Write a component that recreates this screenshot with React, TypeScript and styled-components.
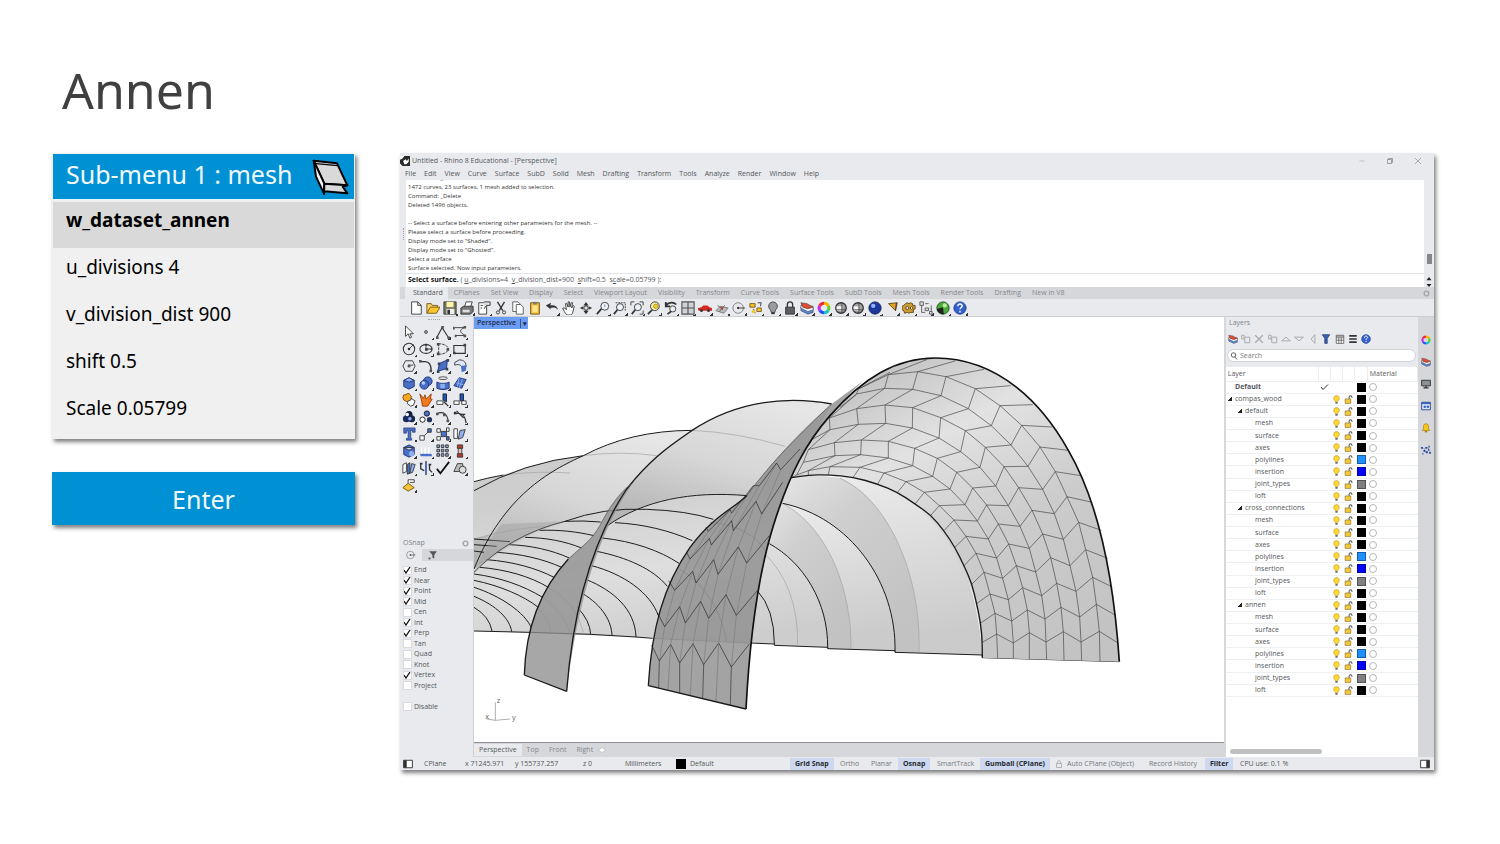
import React from "react";
import styled, { createGlobalStyle } from "styled-components";

const GlobalStyle = createGlobalStyle`
  * { box-sizing: border-box; }
  body { margin: 0; background: #fff; font-family: "Noto Sans", sans-serif; }
  button, input { font: inherit; color: inherit; }
  button { border: 0; padding: 0; background: none; cursor: pointer; }
  ul { list-style: none; margin: 0; padding: 0; }
  svg { display: block; }
`;

/* ---------- Page ---------- */

const Page = styled.main`
  padding: 56px 66px 56px 52px;
`;
const Title = styled.h1`
  margin: 0 0 29px 10px;
  font-size: 50px;
  line-height: 68px;
  font-weight: 400;
  color: #404040;
`;
const Columns = styled.div`
  display: grid;
  grid-template-columns: 303px minmax(0, 1fr);
  column-gap: 45px;
  align-items: start;
`;
const Side = styled.aside`
  display: grid;
  row-gap: 33px;
`;
const Menu = styled.section`
  padding: 1px 1px 3px;
  background: #f0f0f0;
  box-shadow: 2px 3px 4px rgba(0, 0, 0, 0.5);
`;
const MenuHeader = styled.header`
  display: flex;
  justify-content: space-between;
  height: 46px;
  padding: 0 5px 0 13px;
  background: #0091d4;
  border-bottom: 1px solid #e6f4fb;
  color: #f2faff;
`;
const MenuTitle = styled.h2`
  margin: 0;
  font-size: 25px;
  line-height: 40px;
  font-weight: 400;
`;
const MenuRow = styled.button<{ $selected?: boolean }>`
  display: block;
  width: 100%;
  height: ${(p) => (p.$selected ? 46 : 47)}px;
  margin-top: ${(p) => (p.$selected ? 2 : 0)}px;
  padding: ${(p) => (p.$selected ? 0 : 3)}px 13px 11px;
  text-align: left;
  font-size: 19px;
  line-height: ${(p) => (p.$selected ? 34 : 33)}px;
  font-weight: ${(p) => (p.$selected ? 700 : 400)};
  background: ${(p) => (p.$selected ? "#d9d9d9" : "transparent")};
  color: #000;
`;
const EnterButton = styled.button`
  height: 53px;
  background: #0091d4;
  color: #f2faff;
  font-size: 25px;
  box-shadow: 2px 3px 4px rgba(0, 0, 0, 0.5);
`;

/* ---------- Application window ---------- */

const AppWindow = styled.section`
  display: flex;
  flex-direction: column;
  min-width: 0;
  background: #e8eaed;
  color: #55575b;
  font-family: "Open Sans", "Noto Sans", sans-serif;
  font-size: 7px;
  line-height: 12px;
  box-shadow: 2px 3px 4px rgba(0, 0, 0, 0.5);
`;
const TitleBar = styled.header`
  display: flex;
  align-items: center;
  gap: 2px;
  height: 15px;
`;
const WindowTitle = styled.span`
  flex: 1;
`;
const WindowControls = styled.div`
  display: flex;
  gap: 20px;
  padding-right: 12px;
`;
const MenuBar = styled.nav`
  display: flex;
  gap: 8px;
  height: 12px;
  padding-left: 5px;
`;
const Console = styled.div`
  display: grid;
  grid-template-columns: 6px minmax(0, 1fr) 10px;
  height: 107px;
`;
const Grip = styled.span`
  align-self: center;
  justify-self: center;
  height: 12px;
  border-left: 1px dotted #a0a3a8;
`;
const ConsoleText = styled.div`
  display: flex;
  flex-direction: column;
  background: #fff;
`;
const History = styled.div`
  display: flex;
  flex-direction: column;
  justify-content: flex-end;
  height: 94px;
  overflow: hidden;
  padding-left: 2px;
  font-size: 6px;
  line-height: 9px;
  color: #333;
  border-bottom: 1px solid #e4e5e8;
`;
const HistoryLine = styled.div`
  flex: none;
  min-height: 9px;
`;
const Prompt = styled.div`
  padding-left: 2px;
  line-height: 12px;
  white-space: pre;
`;
const Strong = styled.b`
  color: #111;
`;
const ConsoleScroll = styled.div`
  display: flex;
  flex-direction: column;
  align-items: center;
  justify-content: flex-end;
  gap: 13px;
`;
const ScrollThumb = styled.span`
  width: 5px;
  height: 10px;
  background: #85878a;
`;
const TabBar = styled.nav`
  display: flex;
  align-items: center;
  height: 12px;
  padding: 0 4px 0 5px;
  background: #d6d7db;
`;
const Tab = styled.button<{ $active?: boolean }>`
  height: 12px;
  line-height: 12px;
  white-space: nowrap;
  color: ${(p) => (p.$active ? "#55575b" : "#85878b")};
  background: ${(p) => (p.$active ? "#e8eaed" : "transparent")};
`;
const ToolbarTab = styled(Tab)`
  padding: ${(p) => (p.$active ? "0 5px 0 8px" : "0 5px 0 6px")};
`;
const Spacer = styled.span`
  flex: 1;
`;
const Toolbar = styled.div`
  display: flex;
  align-items: center;
  height: 18px;
  padding-left: 7px;
  border-bottom: 1px solid #cdced2;
`;
const ToolButton = styled.button<{ $menu?: boolean }>`
  display: grid;
  place-items: center;
  flex: none;
  width: 17px;
  height: 17px;
  background: ${(p) =>
    p.$menu ? "linear-gradient(135deg, transparent 50%, #333 50%) 14px 14px / 3px 3px no-repeat" : "none"};
`;
const Workspace = styled.div`
  display: grid;
  grid-template-columns: 74px minmax(0, 1fr) 194px 16px;
`;
const Tools = styled.div`
  border-right: 1px solid #cfd0d4;
`;
const Palette = styled.div`
  display: grid;
  grid-template-columns: repeat(4, 17px);
  align-content: start;
  height: 220px;
`;
const PaletteGrip = styled.span`
  grid-column: 1 / -1;
  justify-self: center;
  width: 12px;
  height: 7px;
  border-bottom: 1px dotted #a0a3a8;
  margin: -4px 0 3px;
`;
const PanelTitle = styled.header`
  display: flex;
  align-items: center;
  justify-content: space-between;
  height: 12px;
  padding: 0 4px 0 3px;
  color: #808287;
`;
const SnapTabs = styled.div`
  display: flex;
  height: 12px;
  background: #d6d7db;
`;
const SnapTab = styled.button<{ $active?: boolean }>`
  display: grid;
  place-items: center;
  width: 22px;
  background: ${(p) => (p.$active ? "#e8eaed" : "transparent")};
`;
const SnapList = styled.div`
  display: grid;
  grid-template-rows: repeat(14, 1fr);
  height: 147px;
  margin-top: 4px;
  padding-left: 3px;
`;
const SnapItem = styled.label<{ $last?: boolean }>`
  grid-row: ${(p) => (p.$last ? 14 : "auto")};
  display: flex;
  align-items: center;
  gap: 2px;
  line-height: 10px;
`;
const Check = styled.input`
  appearance: none;
  width: 9px;
  height: 9px;
  margin: 0;
  background: #fff;
  border: 1px solid #d9dade;
  color: #111;
  &:checked {
    background: #fff
      url("data:image/svg+xml,%3Csvg xmlns='http://www.w3.org/2000/svg' viewBox='0 0 9 9'%3E%3Cpath d='M1 4l2 3 4-6' fill='none' stroke='%23111' stroke-width='1.3'/%3E%3C/svg%3E")
      center / 9px;
  }
`;
const Viewport = styled.div`
  display: flex;
  flex-direction: column;
  background: #fff;
`;
const Scene = styled.div`
  display: grid;
  border-bottom: 1px solid #8e9094;
`;
const SceneDrawing = styled.svg`
  grid-area: 1 / 1;
  width: 100%;
  height: auto;
`;
const ViewName = styled.button`
  grid-area: 1 / 1;
  z-index: 1;
  align-self: start;
  justify-self: start;
  display: flex;
  align-items: center;
  height: 12px;
  padding: 0 1px 0 3px;
  background: #6d9df3;
  color: #1c2c4c;
  font-weight: 600;
  gap: 4px;
`;
const ViewMenu = styled.span`
  padding-left: 2px;
  border-left: 1px solid #33558f;
  line-height: 9px;
`;
const ViewTabs = styled(TabBar)`
  height: 14px;
  padding: 0;
`;
const ViewTab = styled(Tab)`
  padding: 0 5px;
`;
const Layers = styled.section`
  display: flex;
  flex-direction: column;
  min-width: 0;
  border-left: 2px solid #d6d7db;
`;
const LayerTools = styled.div`
  display: grid;
  grid-template-columns: repeat(11, 1fr);
  width: 147px;
  height: 20px;
  align-items: center;
  justify-items: center;
`;
const Search = styled.label`
  display: flex;
  align-items: center;
  gap: 2px;
  height: 13px;
  margin: 0 2px 5px 1px;
  padding-left: 2px;
  background: #fff;
  border: 1px solid #d0d2d6;
  border-radius: 7px;
`;
const SearchInput = styled.input`
  width: 120px;
  height: 10px;
  padding: 0;
  border: 0;
  background: none;
  outline: none;
  &::placeholder { color: #77797d; }
`;
const LayerArea = styled.div`
  flex: 1;
  display: flex;
  flex-direction: column;
  justify-content: space-between;
  background: #fff;
`;
const LayerTable = styled.table`
  width: 100%;
  height: 330px;
  table-layout: fixed;
  border-collapse: collapse;
  th, td { padding: 0; height: 12px; line-height: 10px; border-bottom: 1px solid #eeeff1; }
  th { height: 14px; font-weight: 400; text-align: left; border-right: 1px solid #ecedf0; }
  svg { margin: 0 auto; }
`;
const NameCell = styled.td<{ $depth: number; $bold?: boolean }>`
  font-weight: ${(p) => (p.$bold ? 700 : 400)};
  white-space: nowrap;
  && { padding-left: ${(p) => p.$depth * 10 - 1}px; }
`;
const Arrow = styled.span`
  display: inline-block;
  width: 4px;
  height: 4px;
  margin: 0 3px 0 -7px;
  background: linear-gradient(135deg, transparent 50%, #222 50%);
`;
const Swatch = styled.span<{ $color: string }>`
  display: block;
  width: 9px;
  height: 9px;
  margin: 0 auto;
  background: ${(p) => p.$color};
  border: 1px solid rgba(0, 0, 0, 0.35);
`;
const Material = styled.span`
  display: block;
  width: 8px;
  height: 8px;
  margin-left: 1px;
  border: 1px solid #b5b7ba;
  border-radius: 50%;
`;
const HScroll = styled.span`
  width: 92px;
  height: 5px;
  margin: 0 0 3px 4px;
  border-radius: 3px;
  background: #bfc0c2;
`;
const PanelTabs = styled.nav`
  display: flex;
  flex-direction: column;
  align-items: center;
  padding-top: 12px;
  background: #d6d7db;
`;
const PanelTab = styled.button`
  display: grid;
  place-items: center;
  width: 16px;
  height: 22px;
`;
const StatusBar = styled.footer`
  display: grid;
  grid-template-columns: 21px 41px 50px 68px 42px 51px 119px 45px 31px 32px 34px 48px 70px 12px 82px 61px 30px minmax(0, 1fr) 14px;
  align-items: center;
  height: 13px;
  padding-left: 3px;
  white-space: nowrap;
`;
const StatusLayer = styled.span`
  display: flex;
  align-items: center;
  gap: 4px;
`;
const LayerChip = styled.i`
  width: 10px;
  height: 10px;
  background: #000;
`;
const Toggle = styled.button<{ $on?: boolean }>`
  justify-self: start;
  height: 12px;
  line-height: 12px;
  margin-left: ${(p) => (p.$on ? "-5px" : "0")};
  padding: ${(p) => (p.$on ? "0 5px" : "0")};
  color: ${(p) => (p.$on ? "#25282e" : "#77797e")};
  font-weight: ${(p) => (p.$on ? 700 : 400)};
  background: ${(p) => (p.$on ? "#ced8ef" : "transparent")};
`;

/* ---------- Icons, drawn on a 16 unit grid ---------- */

const K = "#333";
const B = "#4a6fc9";
const L = "#8fb0ee";

const icons: Record<string, React.ReactNode> = {
  file: <path d="M3 1h7l4 4v10H3zM10 1v4h4" fill="#fff" stroke={K} />,
  open: <><path d="M1 14V3h5l1 2h6v3" fill="#f7d569" stroke="#715411" /><path d="M1 14l4-7h11l-4 7z" fill="#ffc62f" stroke="#715411" /></>,
  save: <><path d="M1 1h14v14H1z" fill="#77765f" stroke={K} /><path d="M4 1h8v6H4z" fill="#fff3a8" /><path d="M4 9h9v6H4z" fill="#eee" /><path d="M5 10h3v5H5z" fill={K} /></>,
  print: <><path d="M5 7l2-6h7l-2 6" fill="#fff" stroke={K} /><path d="M1 8l3-2h11v6l-3 3H1z" fill="#777" stroke={K} /><path d="M3 10h8v3H3z" fill="#ddd" /></>,
  notes: <><path d="M2 2h9v13H2z" fill="#fff" stroke={K} /><path d="M8 1h7v4h-4l-3 4" fill="#ddd" stroke={K} /><path d="M4 5h3M4 8h2" stroke={K} /></>,
  cut: <><path d="M4 1l6 10M12 1L6 11" stroke={K} strokeWidth="1.5" fill="none" /><circle cx="4.500" cy="13" r="1.800" fill="none" stroke={K} /><circle cx="11.500" cy="13" r="1.800" fill="none" stroke={K} /></>,
  copy: <><path d="M2 1h6l2 2v9H2z" fill="#fff" stroke="#555" /><path d="M6 4h5l3 3v8H6z" fill="#fff" stroke="#555" /></>,
  paste: <><path d="M3 2h10v13H3z" fill="#f3bd35" stroke="#6c500c" /><path d="M6 1h4v3H6z" fill="#777" /><path d="M5 5h6v8H5z" fill="#ffe487" /></>,
  undo: <path d="M1 5l6-3-1 3c5-1 8 1 9 5-3-3-6-3-9-2l1 2z" fill={K} />,
  hand: <path d="M4 14C2 11 1 9 1 8l2 0 2 2-1-7 1.500 0L7 7l0-6 1.500 0L9 7l1.500-5 1.500 0-1 6 2-3 1 1-2 8-2 2H6z" fill="#fff" stroke={K} />,
  rotate: <><path d="M8 1l3 4H5zM8 15l3-4H5zM1 8l4-2v4zM15 8l-4-2v4z" fill={K} /><path d="M8 4v8" stroke={K} strokeWidth="1.500" /><circle cx="8" cy="8" r="2.500" fill="#ddd" stroke={K} /></>,
  zoom: <><circle cx="10" cy="6" r="4.500" fill="#eef4fb" stroke={K} /><path d="M6 9l-5 6" stroke={K} strokeWidth="2" /><path d="M10 4v3" stroke="#777" /></>,
  zoomWin: <><path d="M3 2h11v9" fill="none" stroke={K} strokeDasharray="2 1" /><circle cx="8" cy="7" r="4" fill="#eef4fb" stroke={K} /><path d="M5 10l-4 5" stroke={K} strokeWidth="2" /></>,
  zoomExt: <><path d="M1 5V1h4M11 1h4v4M15 11v4h-4" fill="none" stroke={K} /><circle cx="9" cy="7" r="4" fill="#eef4fb" stroke={K} /><path d="M6 10l-4 5" stroke={K} strokeWidth="2" /></>,
  zoomSel: <><circle cx="9" cy="6" r="5" fill="#f6eeb0" stroke={K} /><circle cx="10" cy="6" r="2.500" fill="#f2d020" stroke="#7b6a10" strokeWidth=".6" /><path d="M6 10l-5 5" stroke={K} strokeWidth="2" /></>,
  undoView: <><path d="M2 5c4-4 9-4 12-1M2 1v5h5" fill="none" stroke={K} strokeWidth="2" /><circle cx="10" cy="9" r="3.500" fill="#eee" stroke={K} /><path d="M8 12l-4 3" stroke={K} strokeWidth="2" /></>,
  grid4: <path d="M1 1h14v14H1zM8 1v14M1 8h14" fill="#cfd1d4" stroke="#555" strokeWidth="1.300" />,
  car: <><path d="M0 10V8l4-1 2-2h5l2 2 3 1v3H1z" fill="#d22a22" /><circle cx="4" cy="11" r="1.600" fill={K} /><circle cx="12" cy="11" r="1.600" fill={K} /></>,
  cplane: <><path d="M1 11l5-5 9 2-5 6z" fill="#bbb" stroke="#777" /><path d="M3 5l6 5M5 12l6-7" stroke="#555" /><circle cx="8" cy="8" r="1.500" fill="#b44" /></>,
  circleR: <><circle cx="7" cy="8" r="6" fill="none" stroke="#777" /><path d="M7 8h8" stroke={K} /><circle cx="7" cy="8" r="1.300" fill={K} /></>,
  select: <><path d="M1 3h6v4H1zM9 8h5v4H9z" fill="#f6c927" stroke="#715411" /><path d="M10 2l4 0-1 4M5 9l2 5" stroke={K} fill="none" /><circle cx="5" cy="12" r="2" fill="#f6c927" /></>,
  lamp: <><path d="M8 1a5 5 0 0 0-3 9l1 3h4l1-3a5 5 0 0 0-3-9z" fill="#9a9c9f" stroke="#444" /><path d="M6 14h4" stroke={K} strokeWidth="2" /></>,
  lock: <><path d="M5 7V4c0-4 6-4 6 0v3" fill="none" stroke={K} strokeWidth="1.500" /><path d="M3 7h10v8H3z" fill="#5c5e61" stroke={K} /></>,
  layers: <><path d="M1 7v4l8 4 6-2V8z" fill="#5b88da" stroke={K} strokeWidth=".6" /><path d="M1 5v3l8 4 6-2V6z" fill="#fff" stroke={K} strokeWidth=".6" /><path d="M1 2l7 1 7 4-6 2-6-2z" fill="#df4c35" stroke={K} strokeWidth=".6" /></>,
  wheel: <g fill="none" strokeWidth="3.500"><path d="M8 2.500a5.500 5.500 0 0 1 4.800 2.800" stroke="#ffb400" /><path d="M12.800 5.300a5.500 5.500 0 0 1 0 5.400" stroke="#5fd02a" /><path d="M12.800 10.700A5.500 5.500 0 0 1 8 13.500" stroke="#14c4c4" /><path d="M8 13.500a5.500 5.500 0 0 1-4.800-2.800" stroke="#2b50ef" /><path d="M3.200 10.700a5.500 5.500 0 0 1 0-5.400" stroke="#c52be8" /><path d="M3.200 5.300A5.500 5.500 0 0 1 8 2.500" stroke="#f0293a" /></g>,
  globe: <><circle cx="8" cy="8" r="6" fill="#a5a5a5" stroke={K} strokeWidth="1.500" /><path d="M3 6h6v5H3z" fill="#f4f4f4" /><path d="M9 2v12M2 10h12" stroke={K} fill="none" strokeWidth=".8" /></>,
  sphere: <><circle cx="8" cy="8" r="7" fill="#1c379c" stroke="#14204f" /><circle cx="6" cy="5.500" r="2.500" fill="#90b3ff" /></>,
  cone: <><path d="M4 3l10-1-2 9z" fill="#e5a02a" stroke="#5d400b" /><path d="M12 11l1-9" stroke={K} fill="none" /></>,
  gear: <><path d="M4 3l2-1 2 1 2-1 2 1v2l3 0v4l-2 1 0 3-3 0-2 1-2-1-3 1-1-3-2-1V6l2-1z" fill="#cc9c37" stroke="#5d440e" /><circle cx="6" cy="8" r="1.700" fill="#eee" stroke="#5d440e" /><circle cx="11" cy="8" r="1.500" fill="#eee" stroke="#5d440e" /></>,
  nodes: <><path d="M1 1h4v4H1zM7 8h4v3H7zM12 12h3v3h-3z" fill="#ddd" stroke="#555" /><path d="M3 5v8h4M11 3H7M14 12V5" stroke="#555" fill="none" /></>,
  leaf: <><circle cx="8" cy="8" r="7" fill="#4da83a" stroke="#1b481a" /><path d="M1 9l7-2 1 8C4 15 1 12 1 9z" fill="#222" /><circle cx="10" cy="5" r="2.500" fill="#b8eca0" /></>,
  help: <><circle cx="8" cy="8" r="7" fill="#3560d0" stroke="#1c3c8c" /><path d="M5.500 6c0-4 5.500-3 5 0-.3 1.500-2.500 1.500-2.500 3.500M8 11v2" stroke="#fff" strokeWidth="1.600" fill="none" /></>,
  arrow: <path d="M4 1v12l3-3 2 5 2-1-2-4h4z" fill="#fff" stroke={K} />,
  point: <circle cx="8" cy="8" r="1.600" fill="#ccc" stroke={K} />,
  poly: <><path d="M1 14L7 3l7 11" fill="none" stroke={K} strokeWidth="1.200" /><path d="M0 13h3v3H0zM6 1h3v3H6zM13 13h3v3h-3z" fill="#555" /></>,
  curve: <><path d="M2 3h11M13 3c-6 3-6 5 1 9H3" fill="none" stroke={K} /><path d="M0 2h2v3H0zM12 1h3v3h-3zM12 11h3v3h-3zM2 11h2v3H2z" fill="#555" /></>,
  circle: <><circle cx="8" cy="8" r="6.500" fill="none" stroke={K} strokeWidth="1.200" /><path d="M8 8l5-5" stroke={K} /><circle cx="8" cy="8" r="1.500" fill={K} /></>,
  ellipse: <><ellipse cx="8" cy="8" rx="7" ry="5" fill="none" stroke={K} strokeWidth="1.200" /><path d="M8 3v5h5" stroke={K} fill="none" /><path d="M7 7h3v3H7zM7 2h2v2H7zM13 7h2v2h-2z" fill={K} /></>,
  arc: <><path d="M3 2c7 0 11 3 11 6s-4 6-11 6M3 2v12" fill="none" stroke={K} strokeDasharray="3 1" /><path d="M1 1h3v3H1zM1 12h3v3H1zM12 7h3v3h-3z" fill="#444" /></>,
  rect: <><path d="M1 4h13v9H1z" fill="none" stroke={K} strokeWidth="1.300" /><path d="M12 2h3v3h-3zM0 11h3v3H0z" fill="#444" /></>,
  hex: <><path d="M4 2h8l3 6-3 6H4L1 8z" fill="none" stroke={K} /><path d="M7 7h6" stroke={K} /><circle cx="8" cy="8" r="1.800" fill="#555" /></>,
  fillet: <><path d="M1 3h6c5 0 7 3 7 11" fill="none" stroke={K} strokeWidth="1.500" /><path d="M0 1h3v3H0zM12 12h3v3h-3z" fill="#555" /></>,
  surf: <><path d="M4 5l9-4-1 10-10 3z" fill={B} stroke="#1a2f70" /><path d="M1 13h3v3H1zM12 0h3v3h-3zM2 4h3v3H2zM11 10h3v3h-3z" fill="#345" /></>,
  bend: <><path d="M2 4l5-3c6 0 8 3 8 8l-4 4c0-5-3-8-9-6z" fill="#dde6f8" stroke={K} /><path d="M9 8l6-1v6l-5 2z" fill={B} /></>,
  box: <><path d="M2 5l6-3 6 3v7l-6 3-6-3z" fill={B} stroke="#1a2f70" /><path d="M2 5l6-3 6 3-6 2z" fill={L} stroke="#1a2f70" /></>,
  spheres: <><circle cx="10" cy="6" r="5" fill={B} stroke="#1a2f70" /><circle cx="6" cy="10" r="5" fill={B} stroke="#1a2f70" /><circle cx="5" cy="8" r="2" fill="#b9cdfb" /></>,
  cyl: <><ellipse cx="8" cy="2.500" rx="5" ry="1.500" fill="#fff" stroke={K} /><path d="M1 7c4 2 10 2 14 0v7c-4 2-10 2-14 0z" fill={B} stroke="#1a2f70" /><path d="M5 9h5v5H5z" fill={L} /></>,
  slab: <><path d="M1 11L7 2l8 2-5 10z" fill={B} stroke="#1a2f70" /><path d="M4 8l8 2M7 2l-2 10M11 3l-4 11" stroke={L} /></>,
  puzzle: <><path d="M2 2h3c0-2 4-2 4 0l2 2-1 2c3 0 2 4 0 4H6l-4-2-1-3z" fill="#f6a81e" stroke="#774b04" /><path d="M7 9l3-1 1-2 2 2 2 1-2 5-3 1-4-3z" fill="#fff" stroke={K} /></>,
  burst: <path d="M1 1l4 5 2-4 1 5 6-6-1 6 2 0-5 8H4L3 9z" fill="#f07a1e" stroke="#963a0b" />,
  trim: <><path d="M8 1h4v9l-4-2z" fill="#2455b5" stroke="#123" /><path d="M1 9h7v4H1z" fill="#fff" stroke={K} /><path d="M9 10l5 5" stroke={K} strokeWidth="1.500" /></>,
  split: <><path d="M8 1h4v8H8z" fill="#2455b5" stroke="#123" /><path d="M1 9h6v4H1zM10 9h5v4h-5z" fill="#fff" stroke={K} /></>,
  group: <><circle cx="8" cy="5" r="4" fill="#111c40" /><circle cx="5" cy="10" r="4" fill="#1c2c60" /><circle cx="11" cy="10" r="4" fill="#1a2550" /><circle cx="6" cy="5" r="2" fill="#fff" /><circle cx="9" cy="10" r="2" fill="#8fb0ee" /></>,
  ungroup: <><circle cx="9" cy="4" r="3" fill={B} stroke="#111" /><circle cx="4" cy="11" r="3" fill="#fff" stroke="#111" /><circle cx="12" cy="11" r="3" fill="#23355f" /></>,
  edit: <><path d="M1 4c8-3 12 1 13 9" fill="none" stroke={K} strokeWidth="1.200" /><path d="M0 3h3v3H0zM8 4h3v3H8zM12 11h3v3h-3z" fill="#555" /></>,
  extend: <><path d="M1 4h6c5 0 7 4 8 11M4 1l8 8M8 5h6" fill="none" stroke={K} strokeWidth="1.400" /><path d="M1 2h3v3H1z" fill={K} /></>,
  text: <path d="M2 1h13v5h-3V4l-2 0v9h1v2H5v-2h2V4L5 5v2H2z" fill={B} stroke="#16295f" strokeWidth=".7" />,
  move: <><path d="M1 10h5v5H1z" fill="#fff" stroke={K} /><path d="M10 2h4v4h-4z" fill={B} stroke={K} /><path d="M6 10l5-5" stroke={K} /></>,
  array: <><path d="M1 2h4v4H1zM1 11h4v4H1zM12 1h3v4h-3z" fill="#fff" stroke={K} /><path d="M6 5h6v6H6z" fill={B} stroke={K} /><path d="M12 11h3v4h-3z" fill={B} stroke={K} /></>,
  flip: <><path d="M1 2h4v11H1z" fill="#fff" stroke={K} /><path d="M8 4l6-1-3 9-5 2z" fill={L} stroke={K} /></>,
  boolean: <><path d="M2 4l6-3 6 3v8l-6 3-6-3z" fill={B} stroke="#1a2f70" /><path d="M2 4h12l-6 3z" fill="#cfddfb" stroke={K} /><circle cx="11" cy="11" r="3" fill={L} /></>,
  extrude: <><path d="M1 11h13l1 3H2z" fill={B} /><path d="M3 11V4M7 11V4M11 11V4" stroke="#fff" strokeWidth="1.500" /></>,
  grid9: <path d="M1 1h3v3H1zM6 1h3v3H6zM11 1h3v3h-3zM1 6h3v3H1zM6 6h3v3H6zM11 6h3v3h-3zM1 11h3v3H1zM6 11h3v3H6zM11 11h3v3h-3z" fill="#9fa5b8" stroke="#2b3040" />,
  dog: <><path d="M5 1h6v4H5zM5 11h6v4H5z" fill="#b93d30" stroke={K} /><path d="M6 5h4v6H6z" fill="#e9c6be" stroke={K} /></>,
  mirror: <><path d="M1 4l4-2v10l-4 2z" fill="#fff" stroke={K} /><path d="M6 4l3-2v12l-3 1z" fill={B} stroke={K} /><path d="M11 3l4 1-3 9-3 1z" fill={L} stroke={K} /></>,
  align: <><path d="M2 3v6l4 2M12 4v6l3 3M8 0v16" fill="none" stroke={K} strokeWidth="1.500" /><path d="M7 2h2v12H7z" fill={B} /><path d="M1 2h3v2H1zM11 3h3v2h-3z" fill={K} /></>,
  tick: <path d="M1 9l4 5L15 1" fill="none" stroke="#111" strokeWidth="2" />,
  solids: <><path d="M1 12L5 3h6l1 9z" fill="#bbb" stroke={K} /><circle cx="11" cy="10" r="4" fill="#ddd" stroke={K} /></>,
  gumball: <><path d="M1 11l6-5 7 5-7 4z" fill="#f3c43a" stroke="#6e510a" /><path d="M7 6V2h7v3H9" fill="#fff" stroke={K} /></>,
  tag: <><path d="M1 2h4v6H1zM6 5h8v9H6z" fill="none" stroke="#a5a8ac" strokeWidth="1.500" /></>,
  cross: <path d="M2 2l12 12M14 2L2 14" stroke="#a5a8ac" strokeWidth="2" />,
  up: <path d="M1 11l7-6 7 6z" fill="none" stroke="#a5a8ac" strokeWidth="1.500" />,
  down: <path d="M1 5l7 6 7-6z" fill="none" stroke="#a5a8ac" strokeWidth="1.500" />,
  left: <path d="M11 1L5 8l6 7z" fill="none" stroke="#a5a8ac" strokeWidth="1.500" />,
  filter: <path d="M2 1h12L10 7v8H6V7z" fill="#3961b5" stroke="#1b3068" />,
  table: <path d="M2 2h12v13H2zM2 6h12M6 6v9M10 6v9M2 10h12M2 3.500h12" fill="#fff" stroke="#666" strokeWidth="1.400" />,
  list: <path d="M2 3h12M2 8h12M2 13h12" stroke="#333" strokeWidth="2.500" />,
  glass: <><circle cx="7" cy="6" r="4.500" fill="none" stroke="#333" strokeWidth="1.500" /><path d="M10 10l4 5" stroke="#333" strokeWidth="1.500" /></>,
  cog: <><circle cx="8" cy="8" r="5" fill="none" stroke="#a2a4a8" strokeWidth="2.500" /><circle cx="8" cy="8" r="7" fill="none" stroke="#a2a4a8" strokeWidth="1.500" strokeDasharray="2 2" /></>,
  bulb: <><path d="M8 1a5 5 0 0 0-3 9l1 2h4l1-2a5 5 0 0 0-3-9z" fill="#ffd92e" stroke="#b6921a" /><path d="M6 14h4" stroke="#666" strokeWidth="3" /></>,
  unlock: <><path d="M9 7V4c0-4 6-3 5 1" fill="none" stroke="#555" strokeWidth="1.800" /><path d="M2 7h10v8H2z" fill="#f4c83a" stroke="#7b6013" /></>,
  monitor: <><path d="M1 2h14v9H1z" fill="#8d9094" stroke="#333" strokeWidth="1.500" /><path d="M4 14h8M8 11v3" stroke="#333" strokeWidth="2" /></>,
  picture: <><path d="M1 2h14v12H1z" fill="#dbe6fb" stroke="#2f4f93" strokeWidth="1.500" /><path d="M1 2h14v3H1z" fill="#3961b5" /><circle cx="6" cy="9" r="2" fill="#3961b5" /><circle cx="11" cy="9" r="2" fill="#3961b5" /></>,
  bell: <><path d="M2 12l2-3V5c0-5 8-5 8 0v4l2 3z" fill="#f8c51c" stroke="#9c7a0c" /><path d="M6 14h4" stroke="#9c7a0c" strokeWidth="2" /></>,
  particles: <><path d="M1 4l4 2 3 7M5 6l6-3 4 9" fill="none" stroke="#7a92c8" /><path d="M0 3h3v3H0zM4 8h3v3H4zM7 3h3v3H7zM8 10h3v3H8zM12 1h2v3h-2zM13 11h3v3h-3zM11 6h2v3h-2zM2 13h2v2H2z" fill="#2f4f9a" /></>,
  rhino: <><path d="M0 0h16v16H0z" fill="#2a2b2d" /><path d="M0 0h7L4 4 0 6zM5 8l4-3 2 3 3-4v5l-4 4H7zM0 12l4 4H0z" fill="#fff" /></>,
  dockL: <><path d="M1 2h14v12H1z" fill="#fff" stroke="#333" strokeWidth="1.500" /><path d="M1 2h5v12H1z" fill="#333" /></>,
  dockR: <><path d="M1 2h14v12H1z" fill="#fff" stroke="#333" strokeWidth="1.500" /><path d="M10 2h5v12h-5z" fill="#333" /></>,
  min: <path d="M3 8h10" stroke="#999" />,
  restore: <path d="M3 5h8v8H3zM5 5V3h8v8h-2" fill="none" stroke="#777" strokeWidth="1.300" />,
  close: <path d="M2 2l12 12M14 2L2 14" stroke="#888" strokeWidth="1.300" />,
  padlock: <path d="M3 7h10v8H3zM5 7V4c0-4 6-4 6 0v3" fill="none" stroke="#a0a2a6" strokeWidth="1.500" />,
  plus: <path d="M8 3l7 5-7 5-7-5z" fill="#fff" stroke="#aaa" />,
  spin: <path d="M8 0l4 5H4zM8 16l4-5H4z" fill="#222" />,
};

const Icon = ({ name, size = 14 }: { name: string; size?: number }) => (
  <svg width={size} height={size} viewBox="0 0 16 16" fill="none" aria-hidden="true">
    {icons[name]}
  </svg>
);

const MeshIcon = () => (
  <svg width="37" height="42" viewBox="0 0 111 126" aria-hidden="true">
    <g stroke="#000" strokeLinejoin="round" strokeWidth="6">
      <path d="M5 20L75 28L106 94L37 89Z" fill="#d9d9d9" />
      <path d="M5 20L12 68L36 119L37 89Z" fill="#f2f2f2" />
      <path d="M36 119L37 89L106 94L92 98L106 118L37 112Z" fill="#d9d9d9" />
      <path d="M12 29L77 35" fill="none" strokeWidth="4" />
    </g>
  </svg>
);

/* ---------- Vault drawing ---------- */

type Pt = [number, number];

const line = (points: Pt[]) => "M" + points.map((p) => p.join(" ")).join("L");

/* Rounds a run of points through the middles of its segments. */
const smooth = (points: Pt[]) =>
  `M${points[0].join(" ")}` +
  points
    .slice(1, -1)
    .map((p, i) => {
      const next = points[i + 2];
      return `Q${p.join(" ")} ${(p[0] + next[0]) / 2} ${(p[1] + next[1]) / 2}`;
    })
    .join("") +
  `L${points[points.length - 1].join(" ")}`;

/* Seams of the front vault, from its inner edge to its outer edge. */
const seams: Pt[][] = [
  [[727, 956], [727, 910], [722, 852], [710, 794], [696, 735], [672, 680], [645, 625], [612, 575], [573, 528], [525, 495], [473, 460], [413, 435], [340, 414], [265, 407], [205, 408], [155, 416]],
  [[773, 957], [770, 885], [765, 823], [750, 765], [732, 700], [708, 643], [678, 592], [642, 543], [598, 500], [553, 460], [498, 428], [432, 402], [360, 385], [270, 383], [205, 395], [170, 408]],
  [[820, 958], [820, 912], [815, 846], [805, 782], [788, 718], [770, 657], [745, 600], [712, 546], [675, 497], [630, 450], [578, 412], [518, 380], [445, 357], [362, 347], [285, 350], [190, 370]],
  [[868, 960], [868, 881], [862, 813], [848, 746], [829, 680], [806, 615], [775, 555], [740, 498], [698, 447], [650, 400], [592, 358], [524, 328], [445, 307], [364, 303], [283, 311], [205, 332]],
  [[920, 962], [918, 909], [915, 840], [905, 770], [887, 699], [868, 628], [840, 562], [805, 500], [767, 441], [720, 385], [662, 338], [597, 297], [517, 267], [437, 253], [355, 256], [270, 272], [215, 302]],
  [[972, 964], [970, 878], [963, 805], [950, 733], [932, 656], [908, 585], [876, 514], [836, 446], [792, 383], [736, 325], [676, 275], [602, 236], [518, 206], [435, 198], [350, 209], [268, 237]],
  [[1025, 965], [1023, 909], [1019, 834], [1008, 757], [990, 680], [970, 601], [943, 524], [908, 451], [864, 382], [813, 318], [754, 260], [685, 209], [603, 170], [518, 151], [434, 148], [350, 165], [300, 205]],
  [[1080, 967], [1078, 877], [1069, 796], [1058, 715], [1037, 632], [1016, 550], [981, 473], [946, 398], [900, 324], [845, 259], [780, 200], [706, 149], [618, 113], [533, 98], [445, 107], [355, 150]],
  [[1138, 968], [1132, 911], [1127, 829], [1117, 744], [1103, 658], [1084, 574], [1057, 490], [1023, 410], [985, 334], [935, 264], [878, 197], [812, 140], [732, 91], [645, 66], [560, 62], [450, 100]],
];
const courses = Array.from({ length: 15 }, (_, i) => seams.map((s) => s[i + 1]));

const stripZigzags: Pt[][] = [
  [[545, 918], [568, 966], [602, 916], [629, 972], [669, 914], [701, 977], [746, 912], [784, 984], [838, 915]],
  [[563, 822], [584, 863], [629, 803], [646, 852], [692, 787], [716, 838], [768, 767], [799, 829], [862, 755]],
  [[596, 725], [614, 754], [668, 697], [678, 732], [731, 662], [744, 706], [805, 624], [830, 672], [898, 590]],
  [[650, 640], [660, 660], [718, 598], [724, 618], [785, 545], [790, 575], [858, 487], [875, 525], [938, 430]],
  [[708, 565], [715, 577], [780, 512], [785, 522], [850, 440], [868, 440], [920, 372], [932, 392], [990, 330]],
];
const stripSeams = Array.from({ length: 7 }, (_, i) => stripZigzags.map((z) => z[i + 1]));

const darkRibs = [
  "M12 805Q58 832 66 876", "M12 772C80 800 120 840 125 878", "M12 745C90 770 165 820 185 868",
  "M12 724C90 740 160 770 205 805", "M12 705C90 715 160 740 218 775", "M30 685C110 692 180 712 235 745",
  "M50 662C130 668 200 688 252 715", "M12 636L42 640M80 640C150 644 220 660 275 685", "M12 617L80 622M118 617C180 619 245 633 298 657",
  "M12 600L120 608M165 595C230 596 285 607 335 627", "M208 574C270 572 320 578 372 590", "M285 547Q340 544 392 549",
  "M322 805Q360 845 362 886", "M335 762C400 800 425 850 426 890", "M350 722C430 755 495 810 498 894",
  "M365 680C460 705 540 760 565 830", "M380 637C470 655 550 690 592 742", "M397 597C490 607 570 635 627 673",
  "M435 551C520 555 600 575 667 605", "M285 547Q400 505 530 511Q650 515 730 541", "M412 560C520 485 660 455 832 470",
  "M12 700C80 630 170 575 285 547",
];
const rightRibs = ["M52 755Q103 810 103 915", "M88 614C190 670 265 790 263 927", "M128 493C330 535 470 730 465 938"];
const paleRibs = ["M70 640Q175 740 173 916", "M128 493C270 570 335 760 333 928", "M300 418C440 480 545 700 537 940"];

const outerEdge = "M18 1110C28 920 50 720 100 560C150 400 200 310 270 230C370 115 470 57 585 57C780 57 910 200 985 334C1070 480 1120 700 1138 968";
const stripShape = "M535 1040C545 870 580 740 660 625C730 530 790 510 830 470C890 390 960 310 1085 195L1180 125C1060 240 1010 310 960 420C890 600 850 760 828 1110Z";
const silhouette = "M12 428Q50 417 100 408Q210 365 340 350Q480 275 665 274Q800 185 970 184Q1030 184 1085 195L962 416C1100 400 1220 430 1335 495C1450 580 1520 720 1537 948L1275 940V935L1073 929V925L913 919V914L498 894L12 876Z";

const VaultScene = () => (
  <SceneDrawing viewBox="12 -66 2250 1275" role="img" aria-label="Perspective view of the shell surfaces">
    <defs>
      <linearGradient id="base" x1="0" y1="0" x2="0.3" y2="1">
        <stop offset="0" stopColor="#c8c8c8" /><stop offset="0.4" stopColor="#cfcfcf" />
        <stop offset="0.7" stopColor="#dedede" /><stop offset="1" stopColor="#cdcdcd" />
      </linearGradient>
      <linearGradient id="shell" x1="0.7" y1="0" x2="0.2" y2="1">
        <stop offset="0" stopColor="#e6e6e6" /><stop offset="0.5" stopColor="#d6d6d6" /><stop offset="1" stopColor="#b4b4b4" />
      </linearGradient>
      <linearGradient id="floor" x1="0" y1="0" x2="0.2" y2="1">
        <stop offset="0" stopColor="#ededed" /><stop offset="0.6" stopColor="#d9d9d9" /><stop offset="1" stopColor="#cbcbcb" />
      </linearGradient>
      <linearGradient id="band" x1="0" y1="0" x2="0.6" y2="1">
        <stop offset="0" stopColor="#e4e4e4" /><stop offset="0.35" stopColor="#cfcfcf" /><stop offset="1" stopColor="#c2c2c2" />
      </linearGradient>
      <linearGradient id="front" x1="0.2" y1="0" x2="0.8" y2="1">
        <stop offset="0" stopColor="#bdbdbd" /><stop offset="0.3" stopColor="#e2e2e2" />
        <stop offset="0.6" stopColor="#cccccc" /><stop offset="1" stopColor="#c3c3c3" />
      </linearGradient>
    </defs>

    <path d={silhouette} fill="url(#base)" />
    <path d="M12 600C70 585 70 590 90 550C150 450 230 405 340 350Q480 275 665 274C560 360 480 430 415 515Q200 540 12 690Z" fill="url(#shell)" />
    <path d="M415 555C490 400 580 320 665 275Q800 185 970 184L1085 195C960 300 890 390 830 470Q600 440 415 555Z" fill="url(#shell)" />
    <g transform="translate(810 0)">
      <path d="M152 416Q210 400 265 407C430 440 540 680 537 940L727 948C710 740 630 600 525 495C420 425 290 390 152 416Z" fill="url(#floor)" />
      <path d="M88 614C170 660 260 760 263 929L465 935C470 730 330 535 128 493Z" fill="url(#floor)" />
      <path d="M128 493C270 570 335 760 333 928L263 929C265 790 190 670 88 614Z" fill="url(#band)" />
      <path d="M152 416L128 493C330 535 470 730 465 938L537 940C545 700 440 480 300 418Q220 405 152 416Z" fill="url(#band)" />
    </g>

    <g fill="none" stroke="#a2a2a2" strokeWidth="2">
      <path d="M665 274Q800 280 945 322M340 350Q450 335 560 350M100 408Q200 395 300 402M12 600Q130 565 240 562" />
      <path d="M205 805Q240 845 243 884M218 775Q290 830 300 884M235 745Q320 790 340 880" />
      <g transform="translate(810 0)">{paleRibs.map((d) => <path key={d} d={d} />)}</g>
    </g>
    <g fill="none" stroke="#1d1d1d" strokeWidth="3">
      {darkRibs.map((d) => <path key={d} d={d} />)}
      <path d="M12 428Q50 417 100 408M12 455Q160 370 340 350M12 690C100 470 240 395 340 350Q480 275 665 274" />
      <g transform="translate(810 0)">
        {rightRibs.map((d) => <path key={d} d={d} />)}
        <path d="M30 912L103 915V919L263 925V929L465 935V940L727 948V956L1138 968" />
      </g>
      <path d="M12 876L180 880L362 886L498 894L548 898" />
    </g>
    <path d="M12 700C50 620 75 580 95 555L285 547Q120 600 12 700Z" fill="#9c9c9c" fillOpacity=".4" />

    <path d="M163 1008C168 830 240 720 295 660C350 610 370 600 400 540Q440 465 490 430C400 560 330 740 290 1057Z" fill="#8e8e8e" fillOpacity=".78" />
    <path d="M290 1057C310 800 370 600 470 450C540 360 600 320 665 275Q800 185 970 184Q1030 184 1085 195M163 1008C168 830 240 720 295 660M163 1008L290 1057" fill="none" stroke="#1a1a1a" strokeWidth="4" />
    <path d="M295 660C350 610 370 600 400 540Q440 465 490 430" fill="none" stroke="#555" strokeWidth="2" />

    <g transform="translate(810 0)">
      <path d="M155 416C200 310 230 280 270 230C370 115 470 57 585 57C780 57 910 200 985 334C1070 480 1120 700 1138 968L727 956C722 740 640 590 525 495C420 425 290 390 155 416Z" fill="url(#front)" />
      <g fill="none" stroke="#444" strokeWidth="2">
        {seams.slice(1, 8).map((s) => <path key={line(s)} d={line(s)} />)}
        {courses.map((c) => <path key={line(c)} d={line(c)} />)}
      </g>
      <path d={smooth(seams[0])} fill="none" stroke="#1a1a1a" strokeWidth="4" />
    </g>
    <path d={stripShape} fill="#8f8f8f" fillOpacity=".82" />
    <path d="M548 898L838 912M630 690Q740 760 770 905M720 550Q840 560 890 640" fill="none" stroke="#858585" strokeWidth="2" />
    <g fill="none" strokeWidth="2">
      {stripSeams.map((s) => <path key={line(s)} d={line(s)} stroke="#7c7c7c" />)}
      {stripZigzags.map((s) => <path key={line(s)} d={line(s)} stroke="#262626" />)}
      <path d="M568 966L566 1046M629 972V1062M701 977L698 1080M784 984L781 1098" stroke="#333" />
      <path d="M602 916L594 1052M669 914L661 1070M746 912L738 1088" stroke="#777" />
      <path d="M535 1040C545 870 580 740 660 625C730 530 790 510 830 470M535 1040L828 1110" stroke="#1a1a1a" strokeWidth="4" />
      <path d="M830 470C890 390 960 310 1085 195" stroke="#444" />
    </g>
    <path d={outerEdge} transform="translate(810 0)" fill="none" stroke="#111" strokeWidth="5" />

    <path d="M76 1090V1144M50 1140L76 1144L120 1140" fill="none" stroke="#888" strokeWidth="2" />
    <g fill="#666" fontSize="22" fontFamily="Open Sans, sans-serif">
      <text x="80" y="1091">z</text><text x="46" y="1140">x</text><text x="126" y="1142">y</text>
    </g>
  </SceneDrawing>
);

/* ---------- Content ---------- */

const menus = ["File", "Edit", "View", "Curve", "Surface", "SubD", "Solid", "Mesh", "Drafting", "Transform", "Tools", "Analyze", "Render", "Window", "Help"];
const history = ["Command: _Delete", "1472 curves, 23 surfaces, 1 mesh added to selection.", "Command: _Delete", "Deleted 1496 objects.", "", "-- Select a surface before entering other parameters for the mesh. --", "Please select a surface before proceeding.", "Display mode set to \"Shaded\".", "Display mode set to \"Ghosted\".", "Select a surface", "Surface selected. Now input parameters."];
const tabs = ["Standard", "CPlanes", "Set View", "Display", "Select", "Viewport Layout", "Visibility", "Transform", "Curve Tools", "Surface Tools", "SubD Tools", "Mesh Tools", "Render Tools", "Drafting", "New in V8"];
const toolbar = ["file", "open", "save", "print", "notes", "cut", "copy", "paste", "undo", "hand", "rotate", "zoom", "zoomWin", "zoomExt", "zoomSel", "undoView", "grid4", "car", "cplane", "circleR", "select", "lamp", "lock", "layers", "wheel", "globe", "globe", "sphere", "cone", "gear", "nodes", "leaf", "help"];
const noMenu = ["file", "open", "cut", "copy", "paste", "rotate", "arrow", "hand", "tick", "table"];
const palette = ["arrow", "point", "poly", "curve", "circle", "ellipse", "arc", "rect", "hex", "fillet", "surf", "bend", "box", "spheres", "cyl", "slab", "puzzle", "burst", "trim", "split", "group", "ungroup", "edit", "extend", "text", "move", "array", "flip", "boolean", "extrude", "grid9", "dog", "mirror", "align", "tick", "solids", "gumball"];
const snaps: [string, boolean][] = [["End", true], ["Near", true], ["Point", true], ["Mid", true], ["Cen", false], ["Int", true], ["Perp", true], ["Tan", false], ["Quad", false], ["Knot", false], ["Vertex", true], ["Project", false], ["Disable", false]];
const layerTools = ["layers", "tag", "cross", "tag", "up", "down", "left", "filter", "table", "list", "help"];
const panels = ["wheel", "layers", "monitor", "picture", "bell", "particles"];

const parts: [string, string][] = [["mesh", "#000"], ["surface", "#000"], ["axes", "#000"], ["polylines", "#1e90ff"], ["insertion", "#0000ff"], ["joint_types", "#808080"], ["loft", "#000"]];
type Layer = { id: string; name: string; depth: number; color: string; parent?: boolean };
const layers: Layer[] = [
  { id: "compas_wood", name: "compas_wood", depth: 1, color: "#000", parent: true },
  ...["default", "cross_connections", "annen"].flatMap((group) => [
    { id: group, name: group, depth: 2, color: "#000", parent: true },
    ...parts.map(([name, color]) => ({ id: group + name, name, depth: 3, color })),
  ]),
];

const LayersPanel = () => (
  <Layers>
    <PanelTitle>Layers</PanelTitle>
    <LayerTools>
      {layerTools.map((name, i) => <button key={i} aria-label={name}><Icon name={name} size={10} /></button>)}
    </LayerTools>
    <Search>
      <Icon name="glass" size={8} />
      <SearchInput placeholder="Search" aria-label="Search layers" />
    </Search>
    <LayerArea>
      <LayerTable>
        <colgroup>
          <col /><col width="12" /><col width="12" /><col width="12" /><col width="13" /><col width="50" />
        </colgroup>
        <thead>
          <tr><th>&nbsp;Layer</th><th /><th /><th /><th /><th>&nbsp;Material</th></tr>
        </thead>
        <tbody>
          <tr>
            <NameCell $depth={1} $bold>Default</NameCell>
            <td><svg width="9" height="8" viewBox="0 0 16 16"><path d="M1 8l4 5L15 3" fill="none" stroke="#333" strokeWidth="2" /></svg></td>
            <td /><td />
            <td><Swatch $color="#000" /></td><td><Material /></td>
          </tr>
          {layers.map((layer) => (
            <tr key={layer.id}>
              <NameCell $depth={layer.depth}>{layer.parent && <Arrow />}{layer.name}</NameCell>
              <td />
              <td><Icon name="bulb" size={9} /></td>
              <td><Icon name="unlock" size={9} /></td>
              <td><Swatch $color={layer.color} /></td>
              <td><Material /></td>
            </tr>
          ))}
        </tbody>
      </LayerTable>
      <HScroll />
    </LayerArea>
  </Layers>
);

const RhinoWindow = () => (
  <AppWindow>
    <TitleBar>
      <Icon name="rhino" size={10} />
      <WindowTitle>Untitled - Rhino 8 Educational - [Perspective]</WindowTitle>
      <WindowControls>
        <button aria-label="Minimize"><Icon name="min" size={8} /></button>
        <button aria-label="Restore"><Icon name="restore" size={8} /></button>
        <button aria-label="Close"><Icon name="close" size={8} /></button>
      </WindowControls>
    </TitleBar>
    <MenuBar>{menus.map((m) => <button key={m}>{m}</button>)}</MenuBar>
    <Console>
      <Grip />
      <ConsoleText>
        <History>{history.map((h, i) => <HistoryLine key={i}>{h}</HistoryLine>)}</History>
        <Prompt><Strong>Select surface.</Strong> ( <u>u</u>_divisions=4  <u>v</u>_division_dist=900  <u>s</u>hift=0.5  s<u>c</u>ale=0.05799 ):</Prompt>
      </ConsoleText>
      <ConsoleScroll><ScrollThumb /><Icon name="spin" size={10} /></ConsoleScroll>
    </Console>
    <TabBar>
      {tabs.map((t, i) => <ToolbarTab key={t} $active={i === 0}>{t}</ToolbarTab>)}
      <Spacer />
      <Icon name="cog" size={7} />
    </TabBar>
    <Toolbar>
      {toolbar.map((name, i) => (
        <ToolButton key={i} $menu={!noMenu.includes(name)} aria-label={name}><Icon name={name} /></ToolButton>
      ))}
    </Toolbar>
    <Workspace>
      <Tools>
        <Palette>
          <PaletteGrip />
          {palette.map((name) => (
            <ToolButton key={name} $menu={!noMenu.includes(name)} aria-label={name}><Icon name={name} /></ToolButton>
          ))}
        </Palette>
        <PanelTitle>OSnap<Icon name="cog" size={7} /></PanelTitle>
        <SnapTabs>
          <SnapTab $active aria-label="Snaps"><Icon name="circleR" size={10} /></SnapTab>
          <SnapTab aria-label="Filters">
            <svg width="10" height="10" viewBox="0 0 16 16"><path d="M2 2h12l-4 6v6l-3-2V8z" fill="#555" /><path d="M1 12h3v3H1z" fill="#555" /></svg>
          </SnapTab>
        </SnapTabs>
        <SnapList>
          {snaps.map(([name, on]) => (
            <SnapItem key={name} $last={name === "Disable"}><Check type="checkbox" defaultChecked={on} />{name}</SnapItem>
          ))}
        </SnapList>
      </Tools>
      <Viewport>
        <Scene>
          <ViewName>Perspective<ViewMenu>▾</ViewMenu></ViewName>
          <VaultScene />
        </Scene>
        <ViewTabs>
          {["Perspective", "Top", "Front", "Right"].map((t, i) => <ViewTab key={t} $active={i === 0}>{t}</ViewTab>)}
          <Icon name="plus" size={8} />
        </ViewTabs>
      </Viewport>
      <LayersPanel />
      <PanelTabs>
        {panels.map((name) => <PanelTab key={name} aria-label={name}><Icon name={name} size={10} /></PanelTab>)}
      </PanelTabs>
    </Workspace>
    <StatusBar>
      <Icon name="dockL" size={10} />
      <span>CPlane</span><span>x 71245.971</span><span>y 155737.257</span><span>z 0</span><span>Millimeters</span>
      <StatusLayer><LayerChip />Default</StatusLayer>
      <Toggle $on>Grid Snap</Toggle><Toggle>Ortho</Toggle><Toggle>Planar</Toggle><Toggle $on>Osnap</Toggle>
      <Toggle>SmartTrack</Toggle><Toggle $on>Gumball (CPlane)</Toggle>
      <Icon name="padlock" size={8} />
      <Toggle>Auto CPlane (Object)</Toggle><Toggle>Record History</Toggle><Toggle $on>Filter</Toggle>
      <span>CPU use: 0.1 %</span>
      <Icon name="dockR" size={10} />
    </StatusBar>
  </AppWindow>
);

export default function App() {
  return (
    <>
      <GlobalStyle />
      <Page>
        <Title>Annen</Title>
        <Columns>
          <Side>
            <Menu>
              <MenuHeader><MenuTitle>Sub-menu 1 : mesh</MenuTitle><MeshIcon /></MenuHeader>
              <MenuRow $selected>w_dataset_annen</MenuRow>
              <MenuRow>u_divisions 4</MenuRow>
              <MenuRow>v_division_dist 900</MenuRow>
              <MenuRow>shift 0.5</MenuRow>
              <MenuRow>Scale 0.05799</MenuRow>
            </Menu>
            <EnterButton>Enter</EnterButton>
          </Side>
          <RhinoWindow />
        </Columns>
      </Page>
    </>
  );
}
